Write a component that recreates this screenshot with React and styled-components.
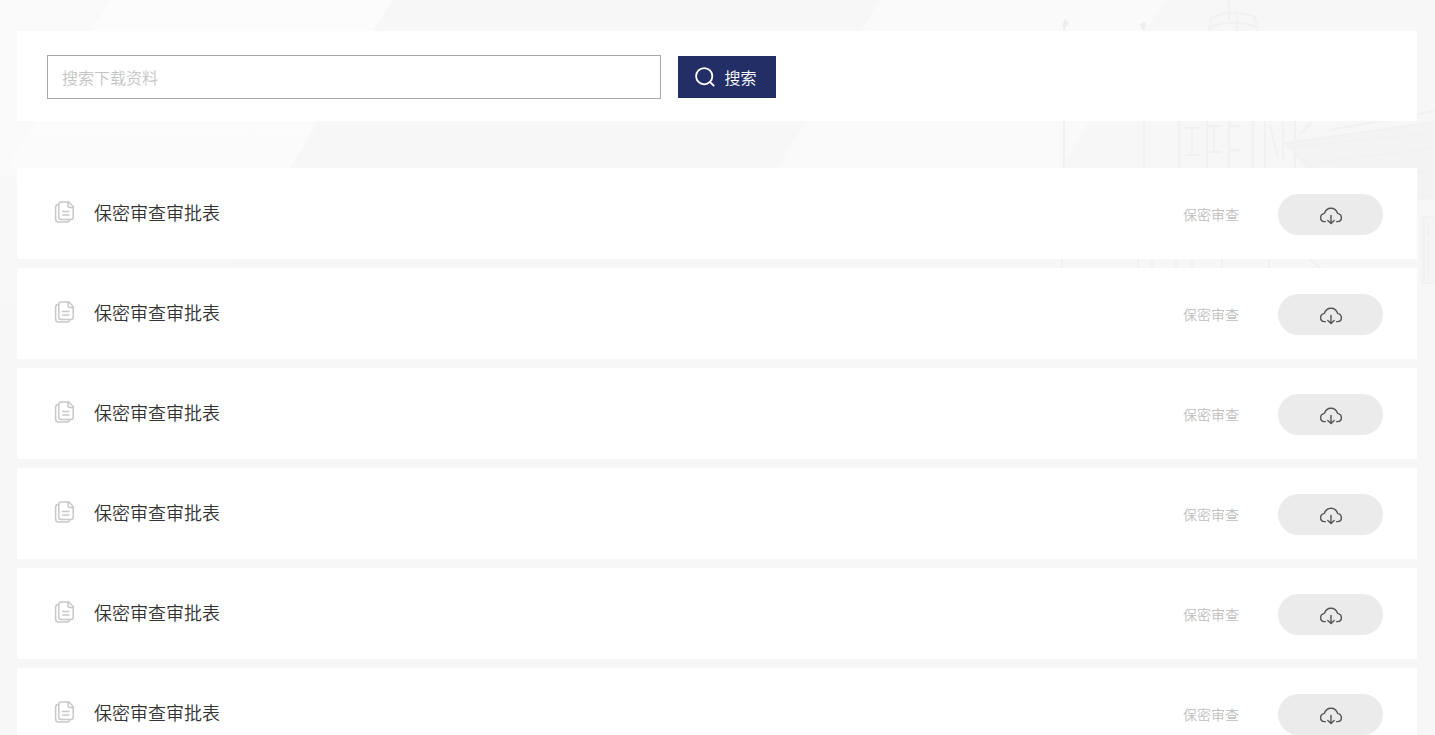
import React from "react";
import styled, { createGlobalStyle } from "styled-components";

const GlobalStyle = createGlobalStyle`
  *,
  *::before,
  *::after {
    box-sizing: border-box;
  }

  body {
    margin: 0;
    background: #f7f7f7;
    color: #333;
    font-family: "Noto Sans CJK SC", "Liberation Sans", sans-serif;
  }
`;

const Page = styled.main`
  position: relative;
  height: 100vh;
  overflow: hidden;
`;

const Backdrop = styled.svg`
  position: absolute;
  inset: 0;
  width: 100%;
  height: 100%;
`;

const Content = styled.div`
  position: relative;
  display: flex;
  flex-direction: column;
  gap: 47px;
  padding: 31px 18px 0 17px;
`;

const SearchBar = styled.form`
  display: flex;
  align-items: center;
  gap: 17px;
  padding: 24px 30px 22px;
  background: #fff;
`;

const SearchInput = styled.input`
  flex: 0 1 614px;
  min-width: 0;
  height: 44px;
  padding: 0 14px;
  border: 1px solid #a9a9a9;
  border-radius: 0;
  background: #fff;
  color: #333;
  font-family: inherit;
  font-size: 16px;
  font-weight: 350;

  &::placeholder {
    color: #c4c4c4;
    opacity: 1;
  }
`;

const SearchButton = styled.button`
  display: flex;
  flex-shrink: 0;
  align-items: center;
  justify-content: center;
  gap: 9px;
  width: 98px;
  height: 42px;
  padding: 0 2px 0 0;
  border: 0;
  background: #242e66;
  color: #fff;
  font-family: inherit;
  font-size: 16px;
  font-weight: 350;
  cursor: pointer;
`;

const FileList = styled.ul`
  display: flex;
  flex-direction: column;
  gap: 9px;
  margin: 0;
  padding: 0;
  list-style: none;
`;

const FileRow = styled.li`
  display: flex;
  align-items: center;
  height: 91px;
  padding: 0 34px 0 37px;
  background: #fff;
`;

const FileLink = styled.a`
  display: flex;
  flex: 1;
  align-items: center;
  gap: 18px;
  min-width: 0;
  padding-bottom: 4px;
  color: #333;
  font-size: 18px;
  font-weight: 350;
  line-height: 26px;
  text-decoration: none;

  &:hover {
    color: #242e66;
  }
`;

const Category = styled.span`
  margin-right: 39px;
  color: #bfbfbf;
  font-size: 14px;
  font-weight: 350;
  line-height: 20px;
`;

const DownloadButton = styled.button`
  display: flex;
  flex-shrink: 0;
  align-items: center;
  justify-content: center;
  width: 105px;
  height: 41px;
  margin-top: 2px;
  padding: 2px 0 0;
  border: 0;
  border-radius: 21px;
  background: #ebebeb;
  color: #555;
  cursor: pointer;
`;

const SearchIcon = () => (
  <svg width="20" height="20" viewBox="0 0 20 20" fill="none" stroke="currentColor" strokeWidth="1.8" aria-hidden="true">
    <circle cx="9.2" cy="9.2" r="8.1" />
    <path d="M15 15L19.2 19.2" />
  </svg>
);

const FileIcon = () => (
  <svg width="22" height="22" viewBox="0 0 22 22" fill="none" stroke="#c8c8c8" strokeWidth="1.5" strokeLinejoin="round" strokeLinecap="round" aria-hidden="true">
    <path d="M7 1H14.8L19.2 5.6V16.2Q19.2 18.4 17 18.4H7Q4.8 18.4 4.8 16.2V3.2Q4.8 1 7 1Z" />
    <path d="M14 1.2V4.4Q14 6.4 16 6.4H19" />
    <path d="M4.4 3.6Q1.6 3.8 1.6 6.4V18Q1.6 21 4.6 21H12.6Q15.4 21 15.8 18.8" />
    <path d="M8.6 10.4H15M8.6 14H15" />
  </svg>
);

const CloudIcon = () => (
  <svg width="24" height="18" viewBox="0 0 24 18" fill="none" stroke="currentColor" strokeWidth="1.4" strokeLinecap="round" strokeLinejoin="round" aria-hidden="true">
    <path d="M6.4 14.6H5.6C3.2 14.6 1.6 13 1.6 10.8C1.6 8.6 3 7 5.4 6.4C6.4 3 8.8 1.2 12 1.2C15.2 1.2 17.6 3 18.6 6.4C21 7 22.4 8.6 22.4 10.8C22.4 13 20.8 14.6 18.4 14.6H17.6" />
    <path d="M12 8.4V16M8.8 13.4L12 16.4L15.2 13.4" />
  </svg>
);

// Faint campus sketch behind the panels
const CampusBackdrop = () => (
  <Backdrop viewBox="0 0 1435 735" preserveAspectRatio="xMidYMin slice" aria-hidden="true">
    <defs>
      <linearGradient id="fade" x1="0" y1="0" x2="0" y2="1">
        <stop offset="0" stopColor="#fcfcfc" />
        <stop offset="0.6" stopColor="#fbfbfb" />
        <stop offset="1" stopColor="#f7f7f7" />
      </linearGradient>
      <linearGradient id="edge" x1="0" y1="0" x2="0" y2="1">
        <stop offset="0" stopColor="#f9f9f9" />
        <stop offset="1" stopColor="#f7f7f7" />
      </linearGradient>
    </defs>
    <path d="M0 0H392L225 275H0Z" fill="url(#fade)" />
    <path d="M0 0H110L0 180Z" fill="#f9f9f9" />
    <path d="M0 168H17V400H0Z" fill="url(#edge)" />
    <path d="M880 0H1165L1060 168H777Z" fill="#fafafa" />
    <path d="M1285 143L1435 122V200H1417L1305 168Z" fill="#f3f3f3" />
    <path d="M1420 216H1435V283H1420Z" fill="#f5f5f5" />
    <g fill="none" stroke="#f1f1f1" strokeWidth="2">
      <path d="M1064 24V168M1144 26V168M1179 120V168M1207 120V168M1229 120V168M1253 120V168M1265 120V168" />
      <path d="M1185 128H1199M1207 126H1221M1229 126H1240M1185 155H1200M1207 152H1221M1229 150H1241M1192 128V154M1214 126V152" />
      <path d="M1229 0V20M1237 12V31M1211 18Q1233 8 1255 17M1210 27Q1234 18 1257 27M1211 18L1209 31M1255 17L1258 31" />
      <path d="M1285 143L1435 122M1287 147L1435 133M1330 130L1435 111M1285 143L1312 168M1310 163L1435 148M1295 120V168M1283 122V160M1270 125L1278 158M1300 134L1312 122" />
      <path d="M1424 217V283M1424 217H1435M1428 222V236M1428 240V278M1422 283H1435M1417 198L1435 194M1417 173L1435 170" />
      <path d="M1062 259V268M1138 259V268M1152 259V268M1176 259V268M1192 259V268M1222 259V268M1269 259V268M1310 259L1320 268" />
    </g>
    <g fill="#eeeeee">
      <path d="M1062 24L1065 19L1069 23L1064 29ZM1140 24L1145 21L1147 26L1142 30Z" />
    </g>
  </Backdrop>
);

const files = Array.from({ length: 6 }, (_, index) => ({
  id: index + 1,
  title: "保密审查审批表",
  category: "保密审查",
}));

const App = () => (
  <>
    <GlobalStyle />
    <Page>
      <CampusBackdrop />
      <Content>
        <SearchBar role="search" onSubmit={(event) => event.preventDefault()}>
          <SearchInput type="text" placeholder="搜索下载资料" aria-label="搜索下载资料" />
          <SearchButton type="submit">
            <SearchIcon />
            搜索
          </SearchButton>
        </SearchBar>

        <FileList>
          {files.map((file) => (
            <FileRow key={file.id}>
              <FileLink href={`#file-${file.id}`}>
                <FileIcon />
                {file.title}
              </FileLink>
              <Category>{file.category}</Category>
              <DownloadButton type="button" aria-label={`下载${file.title}`}>
                <CloudIcon />
              </DownloadButton>
            </FileRow>
          ))}
        </FileList>
      </Content>
    </Page>
  </>
);

export default App;
